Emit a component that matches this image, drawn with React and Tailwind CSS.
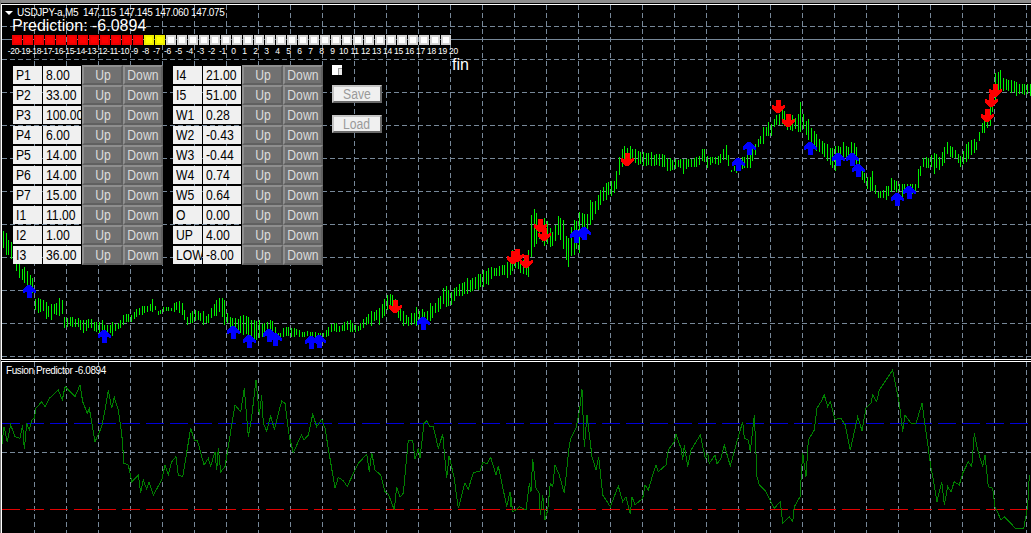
import React from 'react';

const LEFT_ROWS = [
  ['P1', '8.00'], ['P2', '33.00'], ['P3', '100.00'], ['P4', '6.00'], ['P5', '14.00'],
  ['P6', '14.00'], ['P7', '15.00'], ['I1', '11.00'], ['I2', '1.00'], ['I3', '36.00'],
];
const RIGHT_ROWS = [
  ['I4', '21.00'], ['I5', '51.00'], ['W1', '0.28'], ['W2', '-0.43'], ['W3', '-0.44'],
  ['W4', '0.74'], ['W5', '0.64'], ['O', '0.00'], ['UP', '4.00'], ['LOW', '-8.00'],
];

// [x, top, bottom] of the price band, read off the chart
const PRICE = [
  [3, 228, 250], [8, 238, 258], [13, 245, 262], [17, 262, 276], [25, 270, 284], [32, 278, 292], [35, 298, 312],
  [43, 300, 312], [47, 306, 318], [55, 304, 316], [62, 300, 314], [64, 316, 328], [75, 317, 327], [83, 320, 332],
  [90, 319, 329], [97, 322, 333], [104, 325, 334], [117, 324, 331], [124, 314, 324], [133, 314, 322], [137, 306, 316],
  [146, 306, 313], [154, 303, 309], [157, 312, 316], [163, 306, 312], [172, 308, 311], [177, 300, 312], [182, 302, 316],
  [186, 318, 326], [194, 308, 322], [200, 312, 322], [207, 316, 324], [213, 303, 318], [220, 296, 312], [224, 300, 323],
  [228, 316, 326], [238, 318, 332], [246, 314, 336], [249, 320, 348], [257, 321, 338], [273, 322, 336], [279, 334, 340],
  [285, 326, 336], [300, 330, 337], [310, 332, 337], [323, 333, 338], [333, 322, 333], [341, 326, 332], [347, 320, 331],
  [357, 326, 332], [367, 314, 324], [380, 308, 320], [387, 293, 312], [393, 296, 308], [397, 304, 316], [403, 312, 326],
  [407, 316, 328], [413, 312, 324], [422, 311, 322], [430, 308, 320], [437, 300, 314], [444, 286, 304], [450, 292, 306],
  [458, 284, 296], [470, 280, 292], [482, 272, 288], [490, 268, 280], [500, 266, 275], [510, 262, 275], [513, 245, 268],
  [522, 262, 274], [528, 250, 276], [531, 210, 262], [534, 208, 250], [538, 216, 240], [547, 222, 244], [553, 234, 250],
  [557, 218, 232], [563, 216, 250], [567, 243, 265], [572, 224, 254], [580, 212, 250], [586, 216, 232], [590, 202, 224],
  [596, 200, 214], [600, 190, 206], [607, 182, 196], [615, 180, 194], [617, 162, 182], [623, 146, 164], [633, 146, 162],
  [640, 152, 166], [663, 154, 166], [667, 158, 172], [680, 160, 168], [697, 157, 168], [703, 147, 160], [707, 156, 164],
  [717, 157, 166], [722, 151, 160], [727, 149, 158], [730, 171, 173], [733, 168, 172], [738, 158, 170], [745, 156, 168],
  [750, 150, 170], [757, 140, 150], [767, 125, 134], [772, 124, 130], [775, 116, 126], [783, 110, 124], [787, 114, 130],
  [797, 118, 132], [800, 107, 128], [807, 122, 138], [817, 135, 152], [825, 144, 158], [833, 148, 170], [843, 146, 158],
  [855, 144, 162], [862, 170, 180], [866, 176, 188], [873, 178, 190], [877, 192, 198], [887, 190, 198], [890, 178, 192],
  [900, 184, 192], [915, 184, 194], [917, 174, 186], [923, 158, 168], [933, 153, 168], [940, 156, 170], [947, 142, 156],
  [955, 150, 158], [960, 155, 168], [970, 138, 158], [977, 140, 149], [980, 128, 138], [990, 104, 124], [993, 86, 108],
  [997, 70, 92], [1003, 78, 90], [1010, 80, 92], [1020, 83, 96], [1030, 84, 96],
];

const UP_ARROWS = [
  [29, 285], [104, 330], [233, 326], [249, 335], [269, 329], [275, 333], [311, 336], [319, 335], [423, 317],
  [576, 230], [584, 227], [738, 158], [749, 142], [810, 142], [838, 153], [852, 153], [858, 164], [897, 193], [909, 186],
];
const DOWN_ARROWS = [
  [395, 300], [513, 251], [517, 249], [526, 255], [540, 219], [544, 228], [627, 153], [778, 100], [788, 114],
  [987, 109], [991, 94], [995, 84],
];

// indicator line, traced at 3x from the left and right half of the sub window
const LINE_LEFT = [[5,260],[12,200],[22,245],[32,195],[45,230],[60,235],[68,195],[73,268],[80,190],[88,210],[95,180],[103,175],[108,145],[125,125],[135,140],[148,115],[165,100],[175,90],[187,120],[195,80],[210,95],[225,110],[240,75],[248,125],[262,160],[268,145],[285,245],[305,200],[315,150],[325,90],[335,145],[343,112],[355,150],[365,220],[372,310],[385,315],[395,365],[415,345],[422,398],[430,360],[440,388],[447,365],[460,405],[485,360],[495,315],[505,345],[515,305],[528,290],[535,345],[548,350],[558,290],[572,205],[583,240],[592,240],[612,315],[625,295],[632,318],[645,275],[650,330],[655,265],[662,335],[675,320],[685,260],[695,195],[705,135],[722,155],[733,85],[745,230],[755,170],[768,60],[778,165],[785,105],[790,190],[800,213],[812,168],[823,208],[845,123],[855,130],[868,230],[880,278],[897,240],[905,225],[912,240],[925,225],[938,163],[950,200],[965,178],[975,205],[985,265],[1005,385],[1015,352],[1030,362],[1042,380],[1060,340],[1075,310],[1100,283],[1108,335],[1115,278],[1125,330],[1142,345],[1155,395],[1165,402],[1183,450],[1190,380],[1200,412],[1210,400],[1225,240],[1238,240],[1245,298],[1255,265],[1260,295],[1272,190],[1280,183],[1290,200],[1300,200],[1315,265],[1328,222],[1340,355],[1347,288],[1362,350],[1375,445],[1395,368],[1405,388],[1420,338],[1440,333],[1448,308],[1462,310],[1472,292],[1488,345],[1495,318],[1510,390],[1520,440],[1530,395],[1533,440]];
const LINE_RIGHT = [[0,410],[5,455],[15,450],[25,440],[45,450],[55,370],[60,395],[65,298],[75,385],[85,400],[88,465],[95,405],[102,480],[110,450],[118,370],[125,380],[132,315],[145,345],[160,400],[175,255],[180,235],[195,205],[205,155],[213,88],[220,262],[228,165],[243,290],[255,330],[263,290],[275,405],[298,440],[322,378],[335,425],[345,410],[358,462],[363,410],[372,435],[395,415],[402,375],[412,390],[425,345],[435,315],[442,335],[465,315],[472,270],[490,245],[495,222],[510,265],[515,300],[520,255],[530,320],[540,270],[568,225],[583,295],[590,280],[595,310],[612,285],[618,312],[630,295],[640,255],[658,318],[682,230],[695,185],[700,235],[712,240],[718,275],[730,165],[738,350],[745,375],[765,395],[790,445],[808,425],[815,490],[835,470],[845,485],[850,440],[867,410],[875,280],[885,350],[892,240],[910,210],[918,145],[930,125],[940,105],[950,140],[958,125],[972,178],[990,175],[1003,195],[1018,270],[1040,170],[1053,212],[1065,145],[1080,130],[1085,105],[1097,125],[1105,90],[1125,60],[1145,30],[1165,130],[1175,215],[1182,165],[1200,190],[1215,190],[1233,130],[1245,215],[1260,325],[1268,365],[1278,425],[1292,365],[1300,435],[1310,380],[1320,395],[1330,365],[1345,375],[1355,340],[1372,305],[1382,320],[1390,220],[1400,270],[1415,320],[1422,285],[1432,380],[1445,385],[1452,440],[1470,480],[1480,470],[1500,490],[1512,505],[1538,505],[1550,440],[1555,345]];

const linePoints = [
  ...LINE_LEFT.map(([x, y]) => [x / 3, 360 + y / 3]),
  ...LINE_RIGHT.map(([x, y]) => [511 + x / 3, 360 + y / 3]),
].map(([x, y]) => `${x.toFixed(1)},${y.toFixed(1)}`).join(' ');

const noise = (i) => {
  const s = Math.sin(i * 12.9898) * 43758.5453;
  return s - Math.floor(s);
};

const lerpBand = (x) => {
  let k = 0;
  while (k < PRICE.length - 2 && PRICE[k + 1][0] < x) k++;
  const [x0, t0, b0] = PRICE[k];
  const [x1, t1, b1] = PRICE[k + 1];
  const f = Math.min(1, Math.max(0, (x - x0) / (x1 - x0)));
  return [t0 + (t1 - t0) * f, b0 + (b1 - b0) * f];
};

const priceBars = [];
for (let i = 0; ; i++) {
  const x = Math.round(3 + i * 2.667);
  if (x > 1030) break;
  const [top, bottom] = lerpBand(x);
  const span = bottom - top;
  // most bars fill the band, a few poke out of it
  const spike = noise(i + 900) > 0.85 ? 3 + noise(i + 1300) * 5 : 0;
  const h = Math.max(2, span * (0.75 + noise(i) * 0.35) + spike);
  const y = top + (span - h) * noise(i + 500);
  priceBars.push({ x, y: Math.round(y), h: Math.round(h) });
}

const GRID_X = Array.from({ length: 32 }, (_, i) => 34 + i * 32);
const GRID_Y = Array.from({ length: 11 }, (_, i) => 26 + i * 33);

const METER_LABELS = Array.from({ length: 41 }, (_, i) => i - 20);

const meterClass = (i) => {
  if (i < 12) return 'bg-[#ff0000] border-[#ee0000]';
  if (i < 14) return 'bg-[#ffff00] border-[#eeee00]';
  return 'bg-white border-[#d4d4d4]';
};

const GridLines = ({ y1, y2, rows }) => (
  <g stroke="#778899" strokeWidth="1" strokeDasharray="5 3">
    {GRID_X.map((x) => <line key={x} x1={x + 0.5} x2={x + 0.5} y1={y1} y2={y2} />)}
    {rows.map((y) => <line key={y} x1="2" x2="1031" y1={y + 0.5} y2={y + 0.5} />)}
  </g>
);

const upArrow = (c, t) =>
  `${c - 1},${t} ${c + 1},${t} ${c + 6.5},${t + 5} ${c + 6.5},${t + 8} ${c + 2.5},${t + 7} ${c + 2.5},${t + 13} ${c - 2.5},${t + 13} ${c - 2.5},${t + 7} ${c - 6.5},${t + 8} ${c - 6.5},${t + 5}`;
const downArrow = (c, t) =>
  `${c - 2.5},${t} ${c + 2.5},${t} ${c + 2.5},${t + 6} ${c + 6.5},${t + 5} ${c + 6.5},${t + 8} ${c + 1},${t + 13} ${c - 1},${t + 13} ${c - 6.5},${t + 8} ${c - 6.5},${t + 5} ${c - 2.5},${t + 6}`;

const PriceChart = () => (
  <svg className="absolute inset-0" width="1029" height="354" viewBox="2 5 1029 354" shapeRendering="crispEdges">
    <GridLines y1={5} y2={359} rows={GRID_Y} />
    <line x1="2" x2="1031" y1="39.5" y2="39.5" stroke="#778899" />
    {priceBars.map((b, i) => (
      <rect key={i} x={b.x} y={b.y} width="1" height={b.h} fill="#00f000" />
    ))}
    {UP_ARROWS.map(([c, t], i) => <polygon key={i} points={upArrow(c, t)} fill="#0000ff" />)}
    {DOWN_ARROWS.map(([c, t], i) => <polygon key={i} points={downArrow(c, t)} fill="#ff0000" />)}
  </svg>
);

const IndicatorChart = () => (
  <svg className="absolute inset-0" width="1029" height="171" viewBox="2 362 1029 171" shapeRendering="crispEdges">
    <GridLines y1={362} y2={533} rows={[]} />
    <line x1="2" x2="1031" y1="452.5" y2="452.5" stroke="#778899" strokeDasharray="5 3" />
    <line x1="2" x2="1031" y1="423.5" y2="423.5" stroke="#0000d8" strokeDasharray="18 6" />
    <line x1="2" x2="1031" y1="509.5" y2="509.5" stroke="#e00000" strokeDasharray="18 6" />
    <polyline points={linePoints} fill="none" stroke="#008000" strokeWidth="1" />
  </svg>
);

const ParamButton = ({ label, width }) => (
  <button className={`${width} h-5 flex items-center justify-center bg-[#717171] border-2 border-t-[#8e8e8e] border-l-[#8e8e8e] border-b-[#606060] border-r-[#606060] text-[#dcdcdc] text-[14px] leading-none`}>
    <span className="inline-block scale-x-[0.87]">{label}</span>
  </button>
);

const ParamCell = ({ text, width }) => (
  <div className={`${width} h-[18px] pl-[3px] mr-[1px] bg-[#f0f0f0] text-black text-[14px] leading-[18px] overflow-hidden whitespace-nowrap`}>
    <span className="inline-block origin-left scale-x-[0.87]">{text}</span>
  </div>
);

const ParamGroup = ({ rows }) => (
  <div className="flex flex-col">
    {rows.map(([name, value]) => (
      <div key={name} className="flex items-center h-5">
        <ParamCell text={name} width="w-[29px]" />
        <ParamCell text={value} width="w-[38px]" />
        <ParamButton label="Up" width="w-[41px]" />
        <ParamButton label="Down" width="w-[40px]" />
      </div>
    ))}
  </div>
);

const FileButton = ({ label }) => (
  <button className="w-[50px] h-[18px] flex items-center justify-center bg-[#f0f0f0] border-2 border-t-[#c4c4c4] border-l-[#c4c4c4] border-b-[#6a6a6a] border-r-[#6a6a6a] text-[#9a9a9a] text-[14px] leading-none">
    <span className="inline-block scale-x-[0.87]">{label}</span>
  </button>
);

export default function App() {
  return (
    <div className="w-[1031px] h-[533px] bg-black overflow-hidden border-l border-[#808080] font-['Liberation_Sans',Arial,sans-serif]">
      <div className="h-[3px] -ml-[1px] bg-[#8c8c8c]" />
      <div className="h-[1px]" />

      <div className="relative h-[356px] border-t border-b border-l border-white">
        <PriceChart />

        <div className="absolute left-[3px] top-[2px] h-[11px] flex items-center text-white text-[10px] leading-[11px] whitespace-nowrap">
          <span className="w-0 h-0 mr-[4px] border-l-[4px] border-r-[4px] border-t-[4px] border-l-transparent border-r-transparent border-t-white" />
          <span className="w-[66px] tracking-[-0.25px]">USDJPY-a,M5</span>
          <span className="w-[36px] tracking-[-0.4px]">147.115</span>
          <span className="w-[36px] tracking-[-0.4px]">147.145</span>
          <span className="w-[36px] tracking-[-0.4px]">147.060</span>
          <span className="w-[36px] tracking-[-0.4px]">147.075</span>
        </div>

        <div className="absolute left-[10px] top-[11px]">
          <div className="h-[19px] text-white text-[16px] leading-[19px] whitespace-nowrap">Prediction: -6.0894</div>
          <div className="flex gap-[1px]">
            {Array.from({ length: 40 }, (_, i) => (
              <div key={i} className={`w-[10px] h-[10px] border-2 ${meterClass(i)}`} />
            ))}
          </div>
          <div className="flex -ml-[4px] mt-[1px] h-[10px] text-white text-[8.5px] leading-[10px] tracking-[-0.3px]">
            {METER_LABELS.map((n) => (
              <div key={n} className="w-[11px] flex justify-center whitespace-nowrap">{n}</div>
            ))}
          </div>
        </div>

        <div className="absolute left-[450px] top-[50px] text-white text-[16px] leading-[19px]">fin</div>

        <div className="absolute left-[11px] top-[60px] flex">
          <ParamGroup rows={LEFT_ROWS} />
          <div className="w-[10px]" />
          <ParamGroup rows={RIGHT_ROWS} />
          <div className="ml-[9px] flex flex-col">
            <div className="relative w-[10px] h-[10px] bg-white mb-[10px]">
              <div className="absolute left-[6px] top-[3px] w-[4px] h-[7px] border-t border-l border-[#999999] bg-[#e8e8e8]" />
            </div>
            <FileButton label="Save" />
            <div className="h-[12px]" />
            <FileButton label="Load" />
          </div>
        </div>
      </div>

      <div className="h-[1px]" />

      <div className="relative h-[172px] border-t border-l border-white">
        <IndicatorChart />
        <div className="absolute left-[4px] top-[3px] text-white text-[10px] leading-[12px] tracking-[-0.4px] whitespace-nowrap">Fusion Predictor -6.0894</div>
      </div>
    </div>
  );
}
